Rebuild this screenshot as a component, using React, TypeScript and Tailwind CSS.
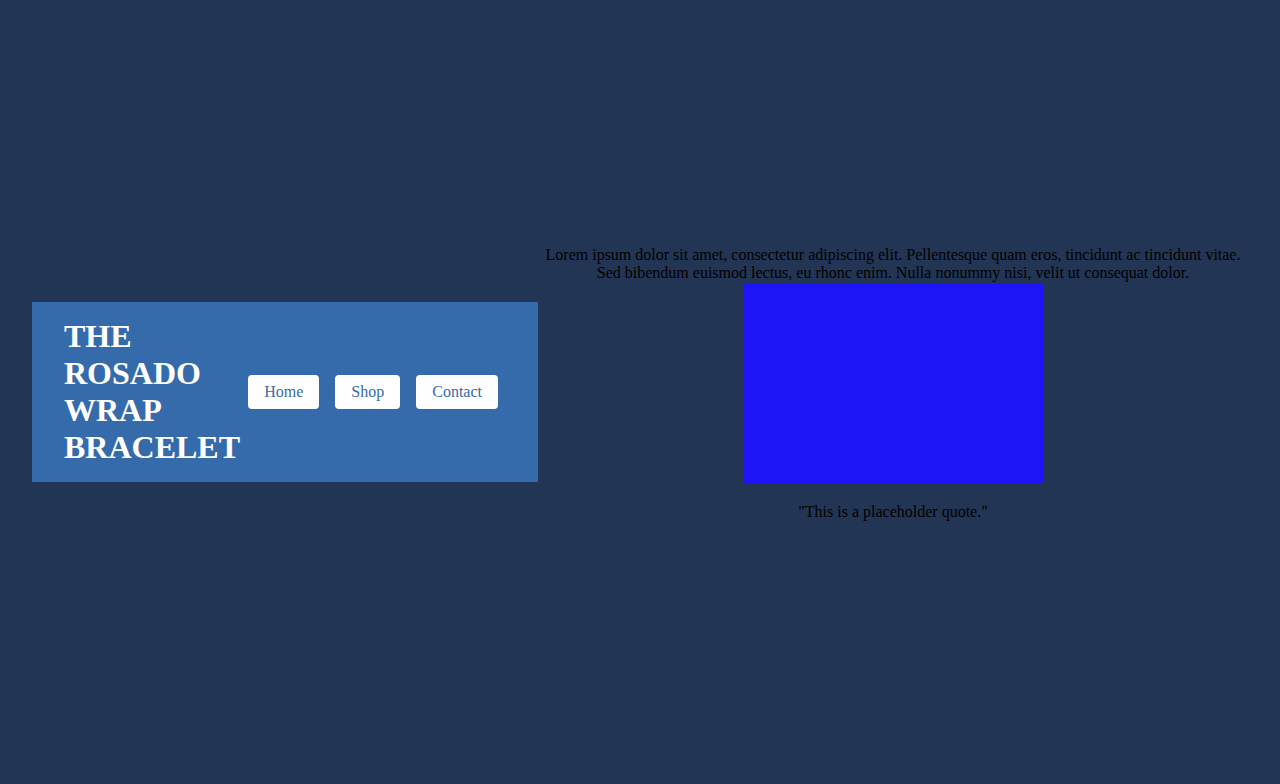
export default function App() {
  const links = ['Home', 'Shop', 'Contact']

  return (
    <div className="min-h-[784px] bg-[#233554] flex items-center px-8 font-['Liberation_Serif',serif]">
      <header className="w-[506px] shrink-0 bg-[#366bab] flex items-center px-8 py-4">
        <h1 className="flex-1 min-w-0 text-[32px] font-bold text-white leading-[37px]">
          THE ROSADO WRAP BRACELET
        </h1>
        <nav className="flex shrink-0">
          {links.map((l) => (
            <a
              key={l}
              href="#"
              className="mx-2 bg-white text-[#366bab] text-[16px] leading-[18px] px-4 py-2 rounded"
            >
              {l}
            </a>
          ))}
        </nav>
      </header>

      <main className="flex-1 flex flex-col items-center text-center text-black text-[16px] leading-[18.5px] pb-[1px]">
        <p>
          Lorem ipsum dolor sit amet, consectetur adipiscing elit. Pellentesque quam eros, tincidunt ac tincidunt vitae.
          <br />
          Sed bibendum euismod lectus, eu rhonc enim. Nulla nonummy nisi, velit ut consequat dolor.
        </p>
        <div className="w-[300px] h-[200px] bg-[#1e14f8]" />
        <p className="mt-5 mb-4">"This is a placeholder quote."</p>
      </main>
    </div>
  )
}
